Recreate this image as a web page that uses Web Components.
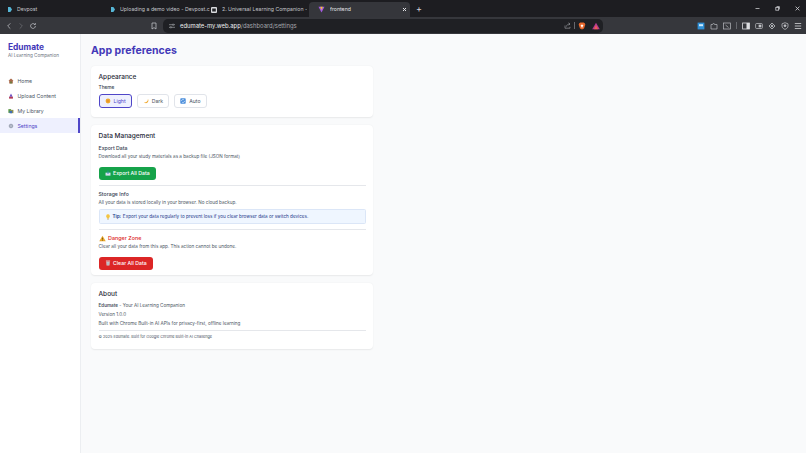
<!DOCTYPE html>
<html><head><meta charset="utf-8">
<style>
html,body{margin:0;height:100%;overflow:hidden}
body{font-family:Inter,"Liberation Sans",sans-serif;display:flex;flex-direction:column;width:806px;height:453px;background:#f9fafb}
</style></head><body>
<browser-chrome></browser-chrome>
<app-shell>
  <app-sidebar slot="side"></app-sidebar>
  <settings-page></settings-page>
</app-shell>
<script>
function def(name,html){
  customElements.define(name,class extends HTMLElement{
    connectedCallback(){ if(!this.shadowRoot){this.attachShadow({mode:'open'}).innerHTML=typeof html==='function'?html(this):html;} }
  });
}
const I={
 home:`<svg viewBox="0 0 8 8" width="6" height="6"><path d="M4 .8.6 3.8h1v3.6h4.8V3.8h1z" fill="#a8694a"/><rect x="3.2" y="4.8" width="1.6" height="2.6" fill="#4f8a3c"/></svg>`,
 upload:`<svg viewBox="0 0 8 8" width="6" height="6"><path d="M4 .5 1.8 5h4.4z" fill="#6d4fc2"/><rect x="1.4" y="5" width="5.2" height="2.5" fill="#b23a55"/></svg>`,
 lib:`<svg viewBox="0 0 8 8" width="6" height="6"><rect x=".5" y="1.5" width="3.6" height="5" fill="#5d9a45"/><rect x="3" y="2.5" width="4.2" height="4.4" fill="#8c8f55"/><rect x="2" y="4" width="3.4" height="3" fill="#3f6fb5"/></svg>`,
 gear:`<svg viewBox="0 0 8 8" width="6" height="6" fill="none" stroke="#7b8494" stroke-width="1"><circle cx="4" cy="4" r="2.4"/><circle cx="4" cy="4" r=".6" fill="#7b8494"/></svg>`,
 sun:`<svg viewBox="0 0 8 8" width="6" height="6"><circle cx="4" cy="4" r="3.2" fill="#f0a92e"/><circle cx="4" cy="4" r="1.8" fill="#e8962a"/></svg>`,
 moon:`<svg viewBox="0 0 8 8" width="6" height="6"><path d="M6.6 1.2C6.6 4.4 4.6 6 1.2 5.8 2.4 7.4 6.8 7.8 7.2 3.4 7.3 2.6 7 1.8 6.6 1.2z" fill="#f0a92e"/></svg>`,
 auto:`<svg viewBox="0 0 8 8" width="6" height="6"><rect x=".4" y=".4" width="7.2" height="7.2" rx="1" fill="#4c8fdc"/><path d="M2 4a2 2 0 0 1 3.4-1.4M6 4a2 2 0 0 1-3.4 1.4" fill="none" stroke="#fff" stroke-width=".8"/></svg>`,
 box:`<svg viewBox="0 0 8 8" width="6" height="6"><path d="M1 3.6v3.6h6V3.6" fill="#d9e3ee" stroke="#bcd0e2" stroke-width=".7"/><path d="M4 .8v3.8M2.8 3.4 4 4.8l1.2-1.4" fill="none" stroke="#3f7fc4" stroke-width=".9"/></svg>`,
 trash:`<svg viewBox="0 0 8 8" width="6" height="6"><rect x="1.2" y=".8" width="5.6" height="1.1" fill="#e3e6ea"/><path d="M1.7 2.4h4.6l-.4 5H2.1z" fill="#cfd3d8"/><path d="M3.2 3v4M4.8 3v4" stroke="#8d9299" stroke-width=".5"/></svg>`,
 bulb:`<svg viewBox="0 0 8 8" width="6" height="6"><path d="M4 .5a2.4 2.4 0 0 0-1.4 4.4v1h2.8v-1A2.4 2.4 0 0 0 4 .5z" fill="#f4c542"/><rect x="3" y="6.2" width="2" height="1.2" fill="#b9a36b"/></svg>`,
 warn:`<svg viewBox="0 0 8 8" width="7" height="7"><path d="M4 .8 7.7 7.2H.3z" fill="#e9a82a"/><rect x="3.6" y="3" width=".8" height="2.2" fill="#5b4210"/><rect x="3.6" y="5.6" width=".8" height=".8" fill="#5b4210"/></svg>`
};
def('browser-tab',h=>`<style>
:host{display:flex;align-items:center;box-sizing:border-box;height:15px;gap:5px;font:5.2px/1 Inter,"Liberation Sans",sans-serif;color:#c3c5ca;white-space:nowrap;overflow:hidden}
:host([active]){background:#35363b;border-radius:4px 4px 0 0;color:#e6e7ea}
svg{flex:none}span{flex:1;overflow:hidden}
</style><slot name="i"></slot><span><slot></slot></span><slot name="x"></slot>`);
const s=(p,extra='')=>`<svg viewBox="0 0 12 12" width="8" height="8" fill="none" stroke="#c4c6cb" stroke-width="1.1" ${extra}>${p}</svg>`;
def('browser-chrome',`<style>
:host{display:block;flex:none;height:34px;font-family:Inter,"Liberation Sans",sans-serif}
.strip{height:17px;background:#1d1d21;display:flex;align-items:flex-end;box-sizing:border-box;padding-left:8px}
.bar{height:17px;background:#36373c;display:flex;align-items:center;box-sizing:border-box;padding-left:5px}
.strip ::slotted(*){}
browser-tab{flex:none}
.t1{width:103px}.t2{width:100px}.t3{width:96px;margin-right:2px}.t4{width:101px;padding:0 3px 0 9px}
.plus{color:#d5d6da;font-size:9px;margin:0 0 2px 6px;line-height:12px}
.win{margin-left:auto;display:flex;gap:15px;align-items:center;height:17px;padding-right:6px;margin-bottom:0}
.nav{display:flex;gap:4px;align-items:center}
.url{width:440px;height:14px;background:#1f2024;border-radius:5px;margin-left:5px;display:flex;align-items:center;font-size:5.9px;color:#d6d7db;padding:0 3px 0 6px;gap:5px;box-sizing:border-box}
.url b{font-weight:400;color:#eeeff1}.url i{font-style:normal;color:#a5a7ad}
.end{margin-left:auto;display:flex;align-items:center;gap:3px}
.sep{width:1px;height:7px;background:#66686e}
.tools{margin-left:auto;display:flex;align-items:center;gap:5px;padding-right:4px}
.tools svg{width:8px;height:8px}
</style>
<div class="strip">
<browser-tab class="t1"><svg slot="i" width="4" height="5" viewBox="0 0 4 5"><path d="M0 0h2.4L4 2.5 2.4 5H0z" fill="#56b6d6"/></svg>Devpost</browser-tab>
<browser-tab class="t2"><svg slot="i" width="4" height="5" viewBox="0 0 4 5"><path d="M0 0h2.4L4 2.5 2.4 5H0z" fill="#56b6d6"/></svg>Uploading a demo video - Devpost.c</browser-tab>
<browser-tab class="t3"><svg slot="i" width="6" height="6" viewBox="0 0 6 6"><rect width="6" height="6" rx="1" fill="#d9dade"/><rect x="1.2" y="1.5" width="3.6" height="3" fill="#26272b"/></svg>2. Universal Learning Companion - V</browser-tab>
<browser-tab class="t4" active><svg slot="i" width="7" height="7" viewBox="0 0 7 7"><path d="M.5.8h6L3.5 6.6z" fill="#a45be0"/><path d="M2.2.8h2.6L3.5 4z" fill="#f2c531"/></svg>frontend<svg slot="x" width="5" height="5" viewBox="0 0 5 5" stroke="#e2e3e6" stroke-width="1"><path d="M1 1l3 3M4 1 1 4"/></svg></browser-tab>
<span class="plus">+</span>
<div class="win">
<svg width="5" height="5" viewBox="0 0 5 5"><path d="M.5 2.5h4" stroke="#c8c9cd" stroke-width=".8"/></svg>
<svg width="5" height="5" viewBox="0 0 5 5" fill="none" stroke="#c8c9cd" stroke-width=".8"><rect x=".8" y="1.4" width="2.8" height="2.8"/><path d="M1.8 1V.6h2.6v2.6H4"/></svg>
<svg width="5" height="5" viewBox="0 0 5 5" stroke="#d6d7da" stroke-width=".8"><path d="M.6.6l3.8 3.8M4.4.6.6 4.4"/></svg>
</div></div>
<div class="bar"><div class="nav">
${s('<path d="M8 2 4 6l4 4"/>')}${s('<path d="M4 2l4 4-4 4"/>','style="opacity:.4"')}${s('<path d="M9.6 6a3.6 3.6 0 1 1-1.1-2.6M9.6 1.6v2.2H7.4"/>')}
</div>
<div style="width:121px;display:flex;justify-content:flex-end">${s('<path d="M3 1.5h6v9L6 8.4 3 10.500z"/>')}</div>
<div class="url">
<svg width="6" height="6" viewBox="0 0 6 6" fill="none" stroke="#b6b8bd" stroke-width=".6"><path d="M0 1.700h3.400M4.800 1.700H6M0 4.300h1.200M2.600 4.300H6"/><circle cx="4.100" cy="1.700" r=".7"/><circle cx="1.900" cy="4.300" r=".7"/></svg>
<span><b>edumate-my.web.app</b><i>/dashboard/settings</i></span>
<div class="end">
<svg width="7" height="7" viewBox="0 0 7 7" fill="none" stroke="#a7a9ae" stroke-width=".6"><path d="M1 3.500v2.700h5V4.800M2.500 4.500C2.800 2.800 4 2 5.800 2M4.600.8 6 2 4.600 3.200"/></svg>
<span class="sep"></span>
<svg width="8" height="8" viewBox="0 0 8 8"><path d="M1.200 1.200 2.400.5h3.200l1.200.7.500 1.600L6 6.500 4 7.600 2 6.500.7 2.800z" fill="#e8672b"/><path d="M4 2.400 2.600 3.200 4 6l1.400-2.800z" fill="#fff"/></svg>
<svg width="8" height="8" viewBox="0 0 8 8" style="margin-left:3px"><path d="M4 .8 7.800 7.200H.2z" fill="#b33a92"/><path d="M4 3 6 7.200H2z" fill="#ef5d52"/></svg>
</div></div>
<div class="tools">
<svg viewBox="0 0 8 8"><rect x=".6" y=".6" width="6.800" height="6.800" fill="#2f8fd6"/><rect x="2" y="2.200" width="4" height="2" fill="#cdeafb"/></svg>
<svg viewBox="0 0 8 8" fill="none" stroke="#b9bbc0" stroke-width=".7"><path d="M1 2.500h1.600a1 1 0 0 1 2 0H7v4.500H1z"/></svg>
<svg viewBox="0 0 8 8" fill="none" stroke="#b9bbc0" stroke-width=".7"><rect x=".6" y="1" width="6.800" height="6"/><path d="M2.500 3l3 2.500" /></svg>
<span class="sep"></span>
<svg viewBox="0 0 8 8"><rect x=".6" y="1" width="6.800" height="6" fill="none" stroke="#dcdde0" stroke-width=".8"/><rect x="4.500" y="1" width="2.900" height="6" fill="#dcdde0"/></svg>
<svg viewBox="0 0 8 8" fill="none" stroke="#c4c6ca" stroke-width=".7"><rect x=".6" y="1.500" width="6.800" height="5" rx="1"/><rect x="4" y="3" width="2" height="2" fill="#c4c6ca"/></svg>
<svg viewBox="0 0 8 8" fill="none" stroke="#c4c6ca" stroke-width=".8"><path d="M4 1 1 4l3 3 3-3z"/><circle cx="4" cy="4" r=".8" fill="#c4c6ca"/></svg>
<svg viewBox="0 0 8 8" fill="none" stroke="#c4c6ca" stroke-width=".7"><path d="M4 .7 7 1.800V4c0 1.700-1.300 2.800-3 3.400C2.300 6.800 1 5.700 1 4V1.800z"/><circle cx="4" cy="3.700" r="1" fill="#c4c6ca"/></svg>
<svg viewBox="0 0 8 8" stroke="#d4d5d8" stroke-width=".8"><path d="M.8 1.500h6.400M.8 4h6.400M.8 6.500h6.400"/></svg>
</div></div>`);
def('app-shell',`<style>:host{display:flex;flex:1;min-height:0;background:#f9fafb}</style><slot name="side"></slot><slot></slot>`);
def('nav-item',`<style>
:host{display:flex;align-items:center;gap:3.500px;height:15px;padding-left:8px;box-sizing:border-box;font-size:5.2px;color:#4b5563;border-right:2px solid transparent}
:host([active]){background:#eef0fe;color:#4f46c8;border-right-color:#4f46c8}
</style><slot name="i"></slot><slot></slot>`);
def('app-sidebar',`<style>
:host{display:block;flex:none;width:81px;box-sizing:border-box;background:#fff;border-right:.5px solid #eceef1;font-family:Inter,"Liberation Sans",sans-serif}
h1{margin:0;font-size:8.400px;line-height:10px;font-weight:700;color:#4338b8}
p{margin:1px 0 0;font-size:4.600px;line-height:6px;color:#6b7280;white-space:nowrap}
.brand{padding:8px 8px 0;height:39px;box-sizing:border-box}
nav{display:flex;flex-direction:column;gap:0;margin-top:0}
</style><div class="brand"><h1>Edumate</h1><p>AI Learning Companion</p></div>
<nav>
<nav-item>${I.home.replace('<svg','<svg slot="i"')}Home</nav-item>
<nav-item>${I.upload.replace('<svg','<svg slot="i"')}Upload Content</nav-item>
<nav-item>${I.lib.replace('<svg','<svg slot="i"')}My Library</nav-item>
<nav-item active>${I.gear.replace('<svg','<svg slot="i"')}Settings</nav-item>
</nav>`);
def('settings-card',`<style>
:host{display:block;background:#fff;border-radius:4px;box-shadow:0 .5px 1.500px rgba(0,0,0,.07);padding:7px 7.500px;box-sizing:border-box;width:282px}
</style><slot></slot>`);
def('theme-btn',`<style>
:host{display:inline-flex;align-items:center;gap:3px;height:14px;box-sizing:border-box;padding:0 5px;border:1px solid #e1e4ea;border-radius:3px;background:#fff;font-size:5.200px;color:#4b5563}
:host([active]){border-color:#4f46c8;background:#eef0fe;color:#4f46c8}
</style><slot name="i"></slot><slot></slot>`);
def('action-btn',`<style>
:host{display:inline-flex;align-items:center;gap:2.500px;height:13px;box-sizing:border-box;padding:0 6px;border-radius:3px;background:var(--bg);color:#fff;font-size:5.200px;font-weight:500}
</style><slot name="i"></slot><slot></slot>`);
const sl=x=>x.replace('<svg','<svg slot="i"');
def('settings-page',`<style>
:host{display:block;flex:1;box-sizing:border-box;padding:10px 10px;font-family:Inter,"Liberation Sans",sans-serif;color:#1f2937}
h1{margin:0 0 9px;font-size:10.500px;line-height:13px;font-weight:700;color:#4338b8;height:13px}
.stack{display:flex;flex-direction:column;gap:8px;align-items:flex-start}
h2{margin:0;font-size:6.500px;line-height:8px;font-weight:500;color:#1f2937}
h3{margin:0;font-size:5.200px;line-height:7px;font-weight:500;color:#374151}
p{margin:0;font-size:4.600px;line-height:6px;color:#4b5563;white-space:nowrap}
.themes{display:flex;gap:5px;margin-top:3px}
hr{border:0;border-top:.5px solid #e5e7eb;margin:5px 0}
.tip{display:flex;align-items:center;gap:2px;height:15px;box-sizing:border-box;padding:0 5px;margin-top:3px;background:#eff6ff;border:.5px solid #dbe6f7;border-radius:1.500px;font-size:4.600px;color:#1e3a8a}
.tip b{font-weight:600;margin-right:.5px}
.danger{display:flex;align-items:center;gap:2.500px;color:#dc2626;font-size:5.400px;line-height:7px;font-weight:500}
</style>
<h1>App preferences</h1>
<div class="stack">
<settings-card style="height:51px"><h2 style="margin-bottom:3px">Appearance</h2>
<h3 style="font-size:4.800px">Theme</h3>
<div class="themes"><theme-btn active>${sl(I.sun)}Light</theme-btn><theme-btn>${sl(I.moon)}Dark</theme-btn><theme-btn>${sl(I.auto)}Auto</theme-btn></div></settings-card>
<settings-card style="height:150px"><h2 style="margin-bottom:5px">Data Management</h2>
<h3>Export Data</h3><p style="margin-top:2px">Download all your study materials as a backup file (JSON format)</p>
<action-btn style="--bg:#16a34a;margin-top:3px">${sl(I.box)}Export All Data</action-btn>
<hr><h3>Storage Info</h3><p style="margin-top:2px">All your data is stored locally in your browser. No cloud backup.</p>
<div class="tip">${I.bulb}<span><b>Tip:</b> Export your data regularly to prevent loss if you clear browser data or switch devices.</span></div>
<hr><div class="danger">${I.warn}Danger Zone</div><p style="margin-top:2px">Clear all your data from this app. This action cannot be undone.</p>
<action-btn style="--bg:#dc2626;margin-top:3px">${sl(I.trash)}Clear All Data</action-btn></settings-card>
<settings-card style="height:66px"><h2 style="margin-bottom:5px">About</h2>
<p><b style="font-weight:600">Edumate</b> - Your AI Learning Companion</p>
<p style="margin-top:3px">Version 1.0.0</p><p style="margin-top:3px">Built with Chrome Built-in AI APIs for privacy-first, offline learning</p>
<hr style="margin:3px 0"><p style="font-size:3.800px;margin-top:3px">© 2025 Edumate. Built for Google Chrome Built-in AI Challenge</p></settings-card>
</div>`);
</script></body></html>
